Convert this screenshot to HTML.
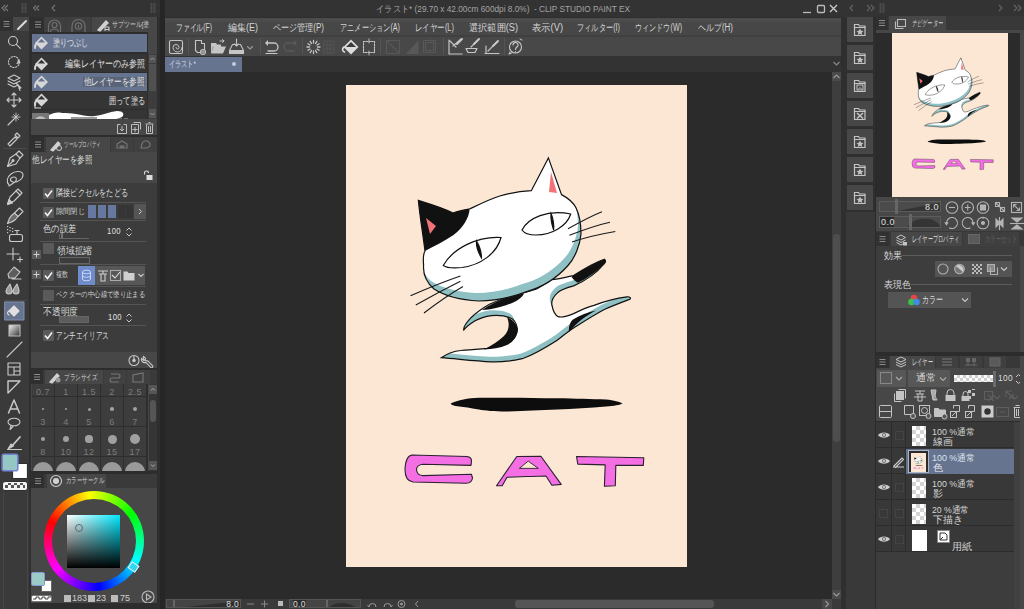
<!DOCTYPE html>
<html><head><meta charset="utf-8">
<style>
*{margin:0;padding:0;box-sizing:border-box}
html,body{width:1024px;height:609px;overflow:hidden;background:#2e2e2e;font-family:"Liberation Sans",sans-serif;color:#d8d8d8}
.a{position:absolute}
svg{display:block}
.t{font-size:9px;white-space:nowrap;line-height:1;transform-origin:0 0}
.j{transform:scaleX(.85);transform-origin:0 0}
</style></head><body>
<!-- title strip -->
<div class="a" style="left:0;top:0;width:1024px;height:17px;background:#333333">
<svg width="1024" height="17" fill="none" stroke="#777" stroke-width="1.1">
<path d="M5 5l-3 3 3 3M8 5l-3 3 3 3M36 5.5l-2.5 2.5 2.5 2.5M39 5.5l-2.5 2.5 2.5 2.5M55 5l-3 3 3 3"/>
<path d="M22.5 3v10M25.5 3v10M151.5 3v10M154.5 3v10" stroke="#4a4a4a" stroke-width="2"/>
<path d="M853 5l-3 3 3 3M867 5l3 3-3 3M871 5l3 3-3 3" stroke="#666"/>
<path d="M880.5 3v10M883.5 3v10" stroke="#4a4a4a" stroke-width="2"/>
<path d="M999 5l3 3-3 3M1014 5l3 3-3 3M1018 5l3 3-3 3" stroke="#666"/>
<path d="M803 12.5h8" stroke="#bbb" stroke-width="1.3"/><rect x="817.5" y="5.5" width="7" height="7" rx="1" stroke="#bbb" stroke-width="1.3"/><path d="M830 5l7 7M837 5l-7 7" stroke="#ccc" stroke-width="1.3"/>
</svg>
<span class="a t" style="left:376px;top:5px;font-size:9px;color:#a4a4a4;transform-origin:0 0;--w:254px;transform:scaleX(0.918)">イラスト* (29.70 x 42.00cm 600dpi 8.0%)&nbsp; - CLIP STUDIO PAINT EX</span>
</div>
<!-- left dock -->
<div class="a" id="ltool" style="left:0;top:17px;width:30px;height:592px;background:#3a3a3a;border-right:1px solid #2e2e2e">
<svg width="30" height="592" viewBox="0 17 30 592" fill="none" stroke="#c9c9c9" stroke-width="1.1" stroke-linecap="round" stroke-linejoin="round">
<!-- header pencil tab -->
<rect x="0" y="17" width="13" height="14" fill="#303030" stroke="none"/>
<path d="M4 21.5h5M4 24h5M4 26.5h5" stroke="#8a8a8a"/>
<rect x="13" y="17" width="16" height="14" fill="#474747" stroke="none"/>
<path d="M18 29l8-8" stroke="#dcdcdc" stroke-width="2"/>
<!-- magnifier 43 -->
<circle cx="13" cy="41" r="4.5"/><path d="M16.3 44.3l4 4"/>
<!-- lasso dotted 62 -->
<circle cx="14" cy="62" r="5.5" stroke-dasharray="1.2 1.6"/><path d="M18 60l2 2.5-3 1" fill="#c9c9c9"/>
<!-- layer select 81 -->
<path d="M8 78l6-3 6 3-6 3zM8 81l6 3 6-3M8 84l6 3 4-2"/><path d="M16 83l5 5-2 .5 1 2" fill="#c9c9c9"/>
<!-- move 100 -->
<path d="M14 93v14M7 100h14M12 95l2-2 2 2M12 105l2 2 2-2M9 98l-2 2 2 2M19 98l2 2-2 2"/>
<!-- magic wand 118 -->
<path d="M8 125l8-8"/><path d="M16 113v8M12 117h8M13.5 114.5l5 5M18.5 114.5l-5 5" stroke-width="0.9"/>
<!-- eyedropper 137 -->
<path d="M8 144l7-7 2 2-7 7zM15 135l2-2 3 3-2 2z"/>
<line x1="4" y1="148.5" x2="26" y2="148.5" stroke="#4c4c4c"/>
<!-- pen 158 -->
<path d="M7.5 166.5L10 158l6-4 4 4-4 6z"/><path d="M16 154l3-3 4 4-3 3" /><path d="M7.5 166.5l5-5"/><circle cx="13" cy="160.5" r="1" fill="#c9c9c9"/>
<!-- lasso brush 177 -->
<path d="M9 185c-3-3-2-8 2-11 5-4 12-3 12 1s-6 8-10 7-3-5 1-5c3 0 3 3 1 5l-6 4"/>
<!-- pencil 196 -->
<path d="M7.5 204.5L10 197l8-8 4 4-8 8z"/><path d="M7.5 204.5L9 199.5l3.5 3.5z" fill="#c9c9c9"/><path d="M16 191l4 4"/>
<!-- brush 215 -->
<path d="M7.5 223.5c1-4 2-6 4-8l3-2.5 3.5 3.5-2.5 3c-2 2-4 3-8 4z" fill="#c9c9c9" fill-opacity=".35"/><path d="M14.5 213l5-5 3.5 3.5-5 5"/>
<!-- airbrush 233 -->
<g fill="#c9c9c9" stroke="none"><rect x="7" y="226" width="1.2" height="1.2"/><rect x="9.5" y="227" width="1.2" height="1.2"/><rect x="7" y="229" width="1.2" height="1.2"/><rect x="12" y="228" width="1.2" height="1.2"/><rect x="9.5" y="230" width="1.2" height="1.2"/><rect x="7" y="232" width="1.2" height="1.2"/><rect x="12" y="231" width="1.2" height="1.2"/></g>
<path d="M15 230.5h4M17 230.5v3"/><rect x="9.5" y="234.5" width="13" height="7" rx="2"/><rect x="11.5" y="236.5" width="9" height="3" fill="#333" stroke="none"/>
<!-- decoration 255 -->
<path d="M13 248v12M7 254h12M20 257v5M17.5 259.5h5"/>
<!-- eraser 272 -->
<path d="M8 274l6-7 6 5-5 6H9zM12 279h9" fill="#c9c9c9" fill-opacity=".25"/>
<!-- blend 290 -->
<path d="M10 284c-2 3-4 5-4 7a3 3 0 006 0c0-2-1-4-2-7zM17 284c-2 3-4 5-4 7a3 3 0 006 0c0-2-1-4-2-7z" fill="#9a9a9a"/>
<line x1="4" y1="300.5" x2="26" y2="300.5" stroke="#4c4c4c"/>
<!-- fill selected 311 -->
<rect x="5" y="302" width="19" height="18" fill="#66748f" stroke="#8090b0" stroke-width="1"/>
<path d="M9 311l5-5 5 5-5 5z" fill="#e0e0e0" stroke="#e0e0e0"/><path d="M9 311c-2 1-2 3 0 4" stroke="#e0e0e0"/>
<!-- gradient 331 -->
<defs><linearGradient id="gr" x1="0" y1="0" x2="1" y2="1"><stop offset="0" stop-color="#f0f0f0"/><stop offset="1" stop-color="#333"/></linearGradient></defs>
<rect x="9" y="325" width="11" height="11" fill="url(#gr)" stroke="#bbb"/>
<!-- line 349 -->
<path d="M7 357l15-15"/>
<!-- frame 369 -->
<path d="M8 363h12v12H8zM8 367h12M14 367v8M14 371h6"/>
<!-- ruler 387 -->
<path d="M8 381h12l-12 12z" stroke-width="1.4"/>
<!-- text A 407 -->
<path d="M8.5 413l5.5-13 5.5 13M10.5 409h7" stroke-width="1.5"/>
<!-- balloon 424 -->
<ellipse cx="14" cy="422" rx="6" ry="3.8"/><path d="M11 425.5l-1 4 3-3"/>
<!-- correction line 443 -->
<path d="M20 437l-8 9" stroke-width="1.8"/><path d="M8 449l3-5 2.5 2z" fill="#c9c9c9"/><path d="M7.5 449.5h14"/>
<!-- colors -->
<rect x="12.5" y="463.5" width="15" height="15" fill="#fff" stroke="#2e2e2e" stroke-width="1.2"/>
<rect x="2.2" y="454.2" width="15.6" height="16.6" rx="2" fill="#94c6c3" stroke="#7482d4" stroke-width="1.6"/>
<rect x="2.5" y="481.5" width="25" height="9" rx="2.5" fill="#f4f4f4" stroke="#2e2e2e" stroke-width="1"/>
<path d="M3.5 493v116M27.5 493v116" stroke="#474747"/>
<path d="M5 485h3v3H5zM11 485h3v3h-3zM17 485h3v3h-3zM23 485h2v3h-2zM8 483h3v2H8zM14 483h3v2h-3zM20 483h3v2h-3z" fill="#555" stroke="none"/>
</svg></div>
<svg width="0" height="0" style="position:absolute"><defs>
<symbol id="bucket" viewBox="0 0 16 16"><path d="M7.5 1.5l6.5 6.5-6.5 6.5L1 8z" fill="#d6d6d6"/><path d="M7.5 3.8L11.2 7.5H3.8z" fill="currentColor"/><path d="M3.5 8.5C1.5 8.5 1 10 1 13" stroke="#d6d6d6" stroke-width="2" fill="none" stroke-linecap="round"/></symbol>
</defs></svg>
<div class="a" id="lsub" style="left:31px;top:17px;width:126px;height:592px;background:#474747">
 <!-- header -->
 <div class="a" style="left:0;top:0;width:126px;height:15px;background:#3a3a3a"></div>
 <div class="a" style="left:0;top:0;width:13px;height:15px;background:#2f2f2f"><svg width="13" height="15"><path d="M4 5h6M4 7.5h6M4 10h6" stroke="#8a8a8a"/></svg></div>
 <div class="a" style="left:13px;top:0;width:21px;height:15px;background:#3f3f3f"><svg width="21" height="15" fill="none" stroke="#707070" stroke-width="1.2"><path d="M4.5 15V9a6 6 0 0112 0v6"/><circle cx="10.5" cy="8" r="2.5"/><path d="M6.5 15a4 3 0 018 0"/></svg></div>
 <div class="a" style="left:35px;top:0;width:25px;height:15px;background:#3f3f3f"><svg width="25" height="15" fill="none" stroke="#707070" stroke-width="1.2"><path d="M6 15V9a6.5 6.5 0 0113 0v6"/><circle cx="12.5" cy="9" r="3.2"/><path d="M12.5 8v3"/></svg></div>
 <div class="a" style="left:61px;top:0;width:65px;height:15px;background:#474747;overflow:hidden"><svg class="a" style="left:4px;top:1px" width="14" height="14" fill="none" stroke="#d0d0d0" stroke-width="1.4"><path d="M2 12l8-9 2 2-8 8z" fill="#d0d0d0"/><path d="M9 9h4M9 11.5h4M9 9v4M13 9v4" stroke-width="1"/></svg><span class="a t" style="left:20px;top:4px;font-size:8px;color:#cfcfcf;--w:37px;transform:scaleX(0.737)">サブツール[塗</span></div>
 <!-- list -->
 <div class="a" style="left:0;top:15px;width:117px;height:87px;background:#2d2d2d"></div>
 <div class="a" style="left:1px;top:17px;width:115px;height:18px;background:#66748f;color:#66748f"><svg class="a" style="left:2px;top:1px" width="16" height="16"><use href="#bucket"/></svg><span class="a t" style="left:21px;top:4px;font-size:10px;color:#e6e6e6;--w:35px;transform:scaleX(0.700)">塗りつぶし</span></div>
 <div class="a" style="left:1px;top:37px;width:115px;height:18px;background:#353535;color:#353535"><svg class="a" style="left:2px;top:2px" width="16" height="16"><use href="#bucket"/></svg><span class="a t" style="right:2px;top:5px;font-size:10px;color:#e0e0e0;transform-origin:100% 0;--w:80px;transform:scaleX(0.800)">編集レイヤーのみ参照</span></div>
 <div class="a" style="left:1px;top:56px;width:115px;height:18px;background:#66748f;color:#66748f"><svg class="a" style="left:2px;top:1px" width="16" height="16"><use href="#bucket"/></svg><span class="a t" style="right:2px;top:4px;font-size:10px;color:#e6e6e6;background:#5a6478;padding:0 1px;transform-origin:100% 0;--w:62px;transform:scaleX(0.756)">他レイヤーを参照</span></div>
 <div class="a" style="left:1px;top:75px;width:115px;height:17px;background:#353535;color:#353535"><svg class="a" style="left:2px;top:0px" width="16" height="16"><use href="#bucket"/></svg><svg class="a" style="left:2px;top:7px" width="10" height="10" fill="none" stroke="#d6d6d6" stroke-width="1.2"><path d="M1 3v6h6"/></svg><span class="a t" style="right:2px;top:4px;font-size:10px;color:#e0e0e0;transform-origin:100% 0;--w:36px;transform:scaleX(0.720)">囲って塗る</span></div>
 <div class="a" style="left:1px;top:93px;width:115px;height:10px;background:#353535;overflow:hidden">
   <svg width="115" height="10"><rect x="0" y="3" width="17" height="7" fill="#777"/><path d="M3 10c1-5 10-5 11 0z" fill="#bbb"/><path d="M17 10V5c4-2 8-3 13-2 5 0 9 0 14 1 7 1 12 3 19 2 8-1 14-4 22-5 6 0 8 3 5 6l-8 3z" fill="#fff"/><rect x="39" y="7" width="26" height="3" fill="#9a9a9a"/><path d="M86 9h4M92 9h4" stroke="#aaa"/></svg>
 </div>
 <!-- scrollbar -->
 <div class="a" style="left:117px;top:37px;width:9px;height:65px;background:#3c3c3c"></div>
 <div class="a" style="left:118px;top:38px;width:7px;height:8px;background:#555"><svg width="7" height="8"><path d="M1.5 5L3.5 3l2 2" stroke="#999" fill="none"/></svg></div>
 <div class="a" style="left:118px;top:47px;width:7px;height:27px;background:#505050"></div>
 <div class="a" style="left:118px;top:92px;width:7px;height:9px;background:#555"><svg width="7" height="9"><path d="M1.5 4L3.5 6l2-2" stroke="#999" fill="none"/></svg></div>
 <!-- bottom icons -->
 <div class="a" style="left:0;top:102px;width:126px;height:16px;background:#474747">
  <svg class="a" style="left:85px;top:2px" width="40" height="13" fill="none" stroke="#bdbdbd" stroke-width="1"><path d="M1.5 3.5h3M7.5 3.5h3v9h-9v-9M6 5v5M4 8l2 2 2-2"/><path d="M17.5 1.5h7v7M15.5 3.5h7v9h-7zM19 6v5M16.5 8.5h5"/><path d="M29.5 3h8M32.5 1.5h2M30.5 3.5v9h6v-9M32.5 5v6M34.5 5v6" /></svg>
 </div>
<div class="a" style="left:0;top:118px;width:126px;height:2px;background:#2d2d2d"></div>
<div class="a" style="left:0;top:120px;width:126px;height:15px;background:#3a3a3a"></div>
<div class="a" style="left:0;top:120px;width:13px;height:15px;background:#2f2f2f"><svg width="13" height="15"><path d="M4 5h6M4 7.5h6M4 10h6" stroke="#8a8a8a"/></svg></div>
<div class="a" style="left:15px;top:120px;width:64px;height:15px;background:#474747"><svg class="a" style="left:3px;top:1px" width="14" height="14" fill="none" stroke="#d0d0d0" stroke-width="1.3"><path d="M2 12l7-8 2 2-7 7z" fill="#d0d0d0"/><circle cx="10" cy="10" r="2.5" stroke-width="1"/></svg><span class="a t j" style="left:18px;top:4px;font-size:8px;color:#c8c8c8;--w:37px;transform:scaleX(0.578)">ツールプロパティ</span></div>
<div class="a" style="left:80px;top:120px;width:22px;height:15px;background:#404040"><svg width="22" height="15" fill="none" stroke="#777" stroke-width="1.1"><path d="M6 11V7l5-3 5 3v4zM9 9h4l-2 2z"/></svg></div>
<div class="a" style="left:103px;top:120px;width:23px;height:15px;background:#404040"><svg width="23" height="15" fill="none" stroke="#777" stroke-width="1.1"><path d="M7 11l1-4a4 4 0 118 2l-3 2z"/></svg></div>
<div class="a" style="left:0;top:135px;width:126px;height:31px;background:#474747"><span class="a t j" style="left:1px;top:3px;font-size:10px;color:#dedede;--w:60px;transform:scaleX(0.750)">他レイヤーを参照</span>
<svg class="a" style="left:112px;top:18px" width="10" height="11" fill="none" stroke="#ddd" stroke-width="1.1"><path d="M1.5 4.5V3a2 2 0 014 0"/><rect x="3.5" y="5" width="6" height="5" fill="#ddd" stroke="none"/></svg></div>
<div class="a" style="left:0;top:166px;width:126px;height:169px;background:#3c3c3c"></div>

<div class="a" style="left:9px;top:185px;width:106px;height:1px;background:#555"></div>
<div class="a" style="left:9px;top:203px;width:106px;height:1px;background:#555"></div>
<div class="a" style="left:9px;top:224px;width:106px;height:1px;background:#555"></div>
<div class="a" style="left:9px;top:247px;width:106px;height:1px;background:#555"></div>
<div class="a" style="left:9px;top:269px;width:106px;height:1px;background:#555"></div>
<div class="a" style="left:9px;top:287px;width:106px;height:1px;background:#555"></div>
<div class="a" style="left:9px;top:308px;width:106px;height:1px;background:#555"></div>
<div class="a" style="left:12px;top:171px;width:11px;height:11px;background:#5a5a5a;border-radius:1px"><svg width="11" height="11"><path d="M2 5.5l2.5 3L9 2.5" stroke="#f2f2f2" stroke-width="1.6" fill="none"/></svg></div>
<span class="a t j" style="left:25px;top:171px;font-size:9.5px;color:#dcdcdc;--w:72px;transform:scaleX(0.720)">隣接ピクセルをたどる</span>
<div class="a" style="left:12px;top:190px;width:11px;height:11px;background:#5a5a5a;border-radius:1px"><svg width="11" height="11"><path d="M2 5.5l2.5 3L9 2.5" stroke="#f2f2f2" stroke-width="1.6" fill="none"/></svg></div>
<span class="a t j" style="left:25px;top:191px;font-size:8px;color:#c8c8c8;--w:29px;transform:scaleX(0.906)">隙間閉じ</span>
<div class="a" style="left:57px;top:188px;width:8px;height:13px;background:#6678a0"></div>
<div class="a" style="left:67px;top:188px;width:8px;height:13px;background:#6678a0"></div>
<div class="a" style="left:77px;top:188px;width:8px;height:13px;background:#6678a0"></div>
<div class="a" style="left:87px;top:188px;width:7px;height:13px;background:#353535"></div>
<div class="a" style="left:95px;top:188px;width:7px;height:13px;background:#353535"></div>
<div class="a" style="left:103px;top:187px;width:12px;height:15px;background:#555"><svg width="12" height="15"><path d="M5 5l2.5 2.5L5 10" stroke="#ccc" fill="none"/></svg></div>
<span class="a t j" style="left:12px;top:207px;font-size:9.5px;color:#dcdcdc;--w:33px;transform:scaleX(0.825)">色の誤差</span>
<div class="a" style="left:28px;top:217px;width:30px;height:5px;border-bottom:1px solid #666;border-left:1px solid #666"></div><div class="a" style="left:30px;top:216px;width:2px;height:5px;background:#777"></div>
<span class="a t j" style="left:76px;top:210px;font-size:9px;color:#e0e0e0;letter-spacing:0.5px">100</span>
<svg class="a" style="left:94px;top:209px" width="8" height="12" fill="none" stroke="#ccc"><path d="M1.5 4.5L4 2l2.5 2.5M1.5 7.5L4 10l2.5-2.5"/></svg>
<div class="a" style="left:1px;top:233px;width:9px;height:9px;background:#5a5a5a"><svg width="9" height="9"><path d="M4.5 1.5v6M1.5 4.5h6" stroke="#cfcfcf"/></svg></div>
<div class="a" style="left:12px;top:226px;width:11px;height:11px;background:#5a5a5a;border-radius:1px"></div>
<span class="a t j" style="left:26px;top:229px;font-size:9.5px;color:#dcdcdc;--w:35px;transform:scaleX(0.875)">領域拡縮</span>
<div class="a" style="left:28px;top:240px;width:31px;height:7px;border:1px solid #666"></div>
<div class="a" style="left:1px;top:253px;width:9px;height:9px;background:#5a5a5a"><svg width="9" height="9"><path d="M4.5 1.5v6M1.5 4.5h6" stroke="#cfcfcf"/></svg></div>
<div class="a" style="left:12px;top:253px;width:11px;height:11px;background:#5a5a5a;border-radius:1px"><svg width="11" height="11"><path d="M2 5.5l2.5 3L9 2.5" stroke="#f2f2f2" stroke-width="1.6" fill="none"/></svg></div>
<span class="a t j" style="left:25px;top:254px;font-size:8px;color:#c8c8c8;--w:12px;transform:scaleX(0.750)">複数</span>
<div class="a" style="left:47px;top:249px;width:67px;height:19px;background:#575757"></div>
<div class="a" style="left:47px;top:249px;width:17px;height:19px;background:#6f8cca"><svg width="17" height="19" fill="none" stroke="#c8d6ff" stroke-width="1"><ellipse cx="8.5" cy="6" rx="4" ry="1.8"/><path d="M4.5 6v7a4 1.8 0 008 0V6M4.5 9.5a4 1.8 0 008 0"/></svg></div>
<svg class="a" style="left:65px;top:249px" width="48" height="19" fill="none" stroke="#d0d0d0" stroke-width="1.1"><path d="M2 5h10M7 5v3M3 8h8M5 8v7h4V8" /><rect x="14.5" y="4.5" width="10" height="10" stroke="#aaa"/><path d="M16 9l3 3 5-6" stroke="#ddd"/><path d="M27.5 5.5h4l1 1.5h6v7.5h-11z" fill="#d0d0d0" stroke="none"/><path d="M42.5 8l2.5 2.5L47.5 8" stroke="#ccc"/></svg>
<div class="a" style="left:12px;top:273px;width:11px;height:11px;background:#5a5a5a;border-radius:1px"></div>
<span class="a t j" style="left:25px;top:274px;font-size:8px;color:#d0d0d0;--w:89px;transform:scaleX(0.795)">ベクターの中心線で塗り止まる</span>
<span class="a t j" style="left:12px;top:290px;font-size:9.5px;color:#dcdcdc;--w:35px;transform:scaleX(0.875)">不透明度</span>
<div class="a" style="left:28px;top:299px;width:30px;height:7px;background:#5c5c5c;border:1px solid #666"></div>
<span class="a t j" style="left:77px;top:296px;font-size:9px;color:#e0e0e0;letter-spacing:0.5px">100</span>
<svg class="a" style="left:94px;top:295px" width="8" height="12" fill="none" stroke="#ccc"><path d="M1.5 4.5L4 2l2.5 2.5M1.5 7.5L4 10l2.5-2.5"/></svg>
<div class="a" style="left:12px;top:313px;width:11px;height:11px;background:#5a5a5a;border-radius:1px"><svg width="11" height="11"><path d="M2 5.5l2.5 3L9 2.5" stroke="#f2f2f2" stroke-width="1.6" fill="none"/></svg></div>
<span class="a t j" style="left:25px;top:314px;font-size:9.5px;color:#dcdcdc;--w:53px;transform:scaleX(0.662)">アンチエイリアス</span>
<div class="a" style="left:0;top:335px;width:126px;height:16px;background:#474747"><svg class="a" style="left:96px;top:1px" width="30" height="15" fill="none" stroke="#c8c8c8" stroke-width="1.1"><circle cx="7" cy="7.5" r="5"/><path d="M7 3v4.5" /><circle cx="7" cy="7.5" r="1.2" fill="#c8c8c8"/><path d="M16.5 3.5a3.2 3.2 0 004 4.2l5 5a1.2 1.2 0 01-1.7 1.7l-5-5a3.2 3.2 0 01-4.2-4l2 2 1.5-.5.5-1.5z"/></svg></div>
<div class="a" style="left:0;top:351px;width:126px;height:2px;background:#2d2d2d"></div>
<div class="a" style="left:0;top:353px;width:126px;height:14px;background:#3a3a3a"></div>
<div class="a" style="left:0;top:353px;width:12px;height:14px;background:#2f2f2f"><svg width="12" height="14"><path d="M3 4.5h6M3 7h6M3 9.5h6" stroke="#8a8a8a"/></svg></div>
<div class="a" style="left:14px;top:353px;width:58px;height:14px;background:#474747"><svg class="a" style="left:3px;top:0" width="14" height="14" fill="none" stroke="#d0d0d0" stroke-width="1.3"><path d="M2 12l7-8 2 2-7 7z" fill="#d0d0d0"/><circle cx="10" cy="10" r="2.5" fill="#999" stroke="none"/></svg><span class="a t j" style="left:19px;top:4px;font-size:8px;color:#d0d0d0;--w:33px;transform:scaleX(0.688)">ブラシサイズ</span></div>
<div class="a" style="left:73px;top:353px;width:22px;height:14px;background:#404040"><svg width="22" height="14" fill="none" stroke="#777" stroke-width="1.1"><path d="M7 4h7a2 2 0 010 4H8a2 2 0 000 4h7"/></svg></div>
<div class="a" style="left:96px;top:353px;width:23px;height:14px;background:#404040"><svg width="23" height="14" fill="none" stroke="#777" stroke-width="1.1"><path d="M6 12V5l10-2v9z"/></svg></div>
<div class="a" style="left:1px;top:367px;width:116px;height:87px;background:#2e2e2e;overflow:hidden"><div class="a" style="left:0px;top:-17px;width:22px;height:29px;background:#3d3d3d"><span class="a t" style="left:0;width:22px;text-align:center;top:21px;font-size:9px;color:#7c7c7c;letter-spacing:.5px">0.7</span></div><div class="a" style="left:23px;top:-17px;width:22px;height:29px;background:#3d3d3d"><span class="a t" style="left:0;width:22px;text-align:center;top:21px;font-size:9px;color:#7c7c7c;letter-spacing:.5px">1</span></div><div class="a" style="left:46px;top:-17px;width:22px;height:29px;background:#3d3d3d"><span class="a t" style="left:0;width:22px;text-align:center;top:21px;font-size:9px;color:#7c7c7c;letter-spacing:.5px">1.5</span></div><div class="a" style="left:69px;top:-17px;width:22px;height:29px;background:#3d3d3d"><span class="a t" style="left:0;width:22px;text-align:center;top:21px;font-size:9px;color:#7c7c7c;letter-spacing:.5px">2</span></div><div class="a" style="left:92px;top:-17px;width:22px;height:29px;background:#3d3d3d"><span class="a t" style="left:0;width:22px;text-align:center;top:21px;font-size:9px;color:#7c7c7c;letter-spacing:.5px">2.5</span></div><div class="a" style="left:0px;top:13px;width:22px;height:29px;background:#3d3d3d"><div class="a" style="left:10px;top:11px;width:2px;height:2px;border-radius:50%;background:#a0a0a0"></div><span class="a t" style="left:0;width:22px;text-align:center;top:21px;font-size:9px;color:#7c7c7c;letter-spacing:.5px">3</span></div><div class="a" style="left:23px;top:13px;width:22px;height:29px;background:#3d3d3d"><div class="a" style="left:9.8px;top:10.8px;width:2.4px;height:2.4px;border-radius:50%;background:#a0a0a0"></div><span class="a t" style="left:0;width:22px;text-align:center;top:21px;font-size:9px;color:#7c7c7c;letter-spacing:.5px">4</span></div><div class="a" style="left:46px;top:13px;width:22px;height:29px;background:#3d3d3d"><div class="a" style="left:9.5px;top:10.5px;width:3.0px;height:3.0px;border-radius:50%;background:#a0a0a0"></div><span class="a t" style="left:0;width:22px;text-align:center;top:21px;font-size:9px;color:#7c7c7c;letter-spacing:.5px">5</span></div><div class="a" style="left:69px;top:13px;width:22px;height:29px;background:#3d3d3d"><div class="a" style="left:9.3px;top:10.3px;width:3.4px;height:3.4px;border-radius:50%;background:#a0a0a0"></div><span class="a t" style="left:0;width:22px;text-align:center;top:21px;font-size:9px;color:#7c7c7c;letter-spacing:.5px">6</span></div><div class="a" style="left:92px;top:13px;width:22px;height:29px;background:#3d3d3d"><div class="a" style="left:9px;top:10px;width:4px;height:4px;border-radius:50%;background:#a0a0a0"></div><span class="a t" style="left:0;width:22px;text-align:center;top:21px;font-size:9px;color:#7c7c7c;letter-spacing:.5px">7</span></div><div class="a" style="left:0px;top:43px;width:22px;height:29px;background:#3d3d3d"><div class="a" style="left:8.7px;top:9.7px;width:4.6px;height:4.6px;border-radius:50%;background:#a0a0a0"></div><span class="a t" style="left:0;width:22px;text-align:center;top:21px;font-size:9px;color:#7c7c7c;letter-spacing:.5px">8</span></div><div class="a" style="left:23px;top:43px;width:22px;height:29px;background:#3d3d3d"><div class="a" style="left:8px;top:9px;width:6px;height:6px;border-radius:50%;background:#a0a0a0"></div><span class="a t" style="left:0;width:22px;text-align:center;top:21px;font-size:9px;color:#7c7c7c;letter-spacing:.5px">10</span></div><div class="a" style="left:46px;top:43px;width:22px;height:29px;background:#3d3d3d"><div class="a" style="left:7.4px;top:8.4px;width:7.2px;height:7.2px;border-radius:50%;background:#a0a0a0"></div><span class="a t" style="left:0;width:22px;text-align:center;top:21px;font-size:9px;color:#7c7c7c;letter-spacing:.5px">12</span></div><div class="a" style="left:69px;top:43px;width:22px;height:29px;background:#3d3d3d"><div class="a" style="left:6.5px;top:7.5px;width:9.0px;height:9.0px;border-radius:50%;background:#a0a0a0"></div><span class="a t" style="left:0;width:22px;text-align:center;top:21px;font-size:9px;color:#7c7c7c;letter-spacing:.5px">15</span></div><div class="a" style="left:92px;top:43px;width:22px;height:29px;background:#3d3d3d"><div class="a" style="left:6px;top:7px;width:10px;height:10px;border-radius:50%;background:#a0a0a0"></div><span class="a t" style="left:0;width:22px;text-align:center;top:21px;font-size:9px;color:#7c7c7c;letter-spacing:.5px">17</span></div><div class="a" style="left:0px;top:73px;width:22px;height:29px;background:#3d3d3d"><div class="a" style="left:1px;top:5px;width:20px;height:20px;border-radius:50%;background:#9a9a9a"></div></div><div class="a" style="left:23px;top:73px;width:22px;height:29px;background:#3d3d3d"><div class="a" style="left:1px;top:5px;width:20px;height:20px;border-radius:50%;background:#9a9a9a"></div></div><div class="a" style="left:46px;top:73px;width:22px;height:29px;background:#3d3d3d"><div class="a" style="left:1px;top:5px;width:20px;height:20px;border-radius:50%;background:#9a9a9a"></div></div><div class="a" style="left:69px;top:73px;width:22px;height:29px;background:#3d3d3d"><div class="a" style="left:1px;top:5px;width:20px;height:20px;border-radius:50%;background:#9a9a9a"></div></div><div class="a" style="left:92px;top:73px;width:22px;height:29px;background:#3d3d3d"><div class="a" style="left:1px;top:5px;width:20px;height:20px;border-radius:50%;background:#9a9a9a"></div></div></div>
<div class="a" style="left:118px;top:367px;width:8px;height:87px;background:#353535"></div>
<div class="a" style="left:118px;top:368px;width:8px;height:9px;background:#555"><svg width="8" height="9"><path d="M2 5.5L4 3.5l2 2" stroke="#aaa" fill="none"/></svg></div>
<div class="a" style="left:119px;top:383px;width:6px;height:22px;background:#555;border-radius:3px"></div>
<div class="a" style="left:118px;top:444px;width:8px;height:9px;background:#555"><svg width="8" height="9"><path d="M2 3.5L4 5.5l2-2" stroke="#aaa" fill="none"/></svg></div>
<div class="a" style="left:0;top:454px;width:126px;height:3px;background:#2d2d2d"></div>
<div class="a" style="left:0;top:457px;width:126px;height:14px;background:#3a3a3a"></div>
<div class="a" style="left:0;top:457px;width:13px;height:14px;background:#2f2f2f"><svg width="13" height="14"><path d="M4 4.5h6M4 7h6M4 9.5h6" stroke="#8a8a8a"/></svg></div>
<div class="a" style="left:16px;top:457px;width:59px;height:14px;background:#474747"><svg class="a" style="left:2px;top:0" width="14" height="14" fill="none" stroke="#d0d0d0" stroke-width="1.1"><circle cx="7" cy="7" r="5.5"/><circle cx="7" cy="7" r="2.5" fill="#d0d0d0"/></svg><span class="a t j" style="left:19px;top:3px;font-size:8px;color:#d0d0d0;--w:38px;transform:scaleX(0.679)">カラーサークル</span></div>
<div class="a" style="left:0;top:471px;width:126px;height:115px;background:#474747"></div>
<div class="a" style="left:13px;top:474px;width:100px;height:100px;border-radius:50%;background:conic-gradient(from 294deg,#f00,#ff0,#0f0,#0ff,#00f,#f0f,#f00)"></div>
<div class="a" style="left:21px;top:482px;width:84px;height:84px;border-radius:50%;background:#474747"></div>
<div class="a" style="left:36px;top:498px;width:53px;height:53px;background:linear-gradient(to bottom,rgba(0,0,0,0),#000),linear-gradient(to right,#fff,#00e8ff)"></div>
<div class="a" style="left:44px;top:507px;width:8px;height:8px;border-radius:50%;border:1px solid #666"></div>
<div class="a" style="left:98px;top:546px;width:9px;height:8px;background:#2ed8f0;border:1.5px solid #f4f4f4;transform:rotate(35deg)"></div>
<div class="a" style="left:10px;top:563px;width:11px;height:12px;background:#fff;border:1px solid #666"></div>
<div class="a" style="left:0px;top:555px;width:14px;height:14px;background:#9ccac9;border:1.5px solid #8497d3;border-radius:2px"></div>
<div class="a" style="left:0px;top:578px;width:21px;height:7px;background:#fff;border:1px solid #777;border-radius:2px"><svg width="19" height="5"><path d="M1 3h3v-2h3v2h3v-2h3v2h3v-2h3" stroke="#444" fill="none"/></svg></div>
<svg class="a" style="left:33px;top:577px" width="70" height="10"><rect x="0" y="1" width="7" height="7" fill="#bbb"/><rect x="24" y="1" width="7" height="7" fill="#bbb"/><rect x="47" y="1" width="7" height="7" fill="#bbb"/></svg>
<span class="a t" style="left:41px;top:577px;font-size:9px;color:#d0d0d0">183</span>
<span class="a t" style="left:65px;top:577px;font-size:9px;color:#d0d0d0">23</span>
<span class="a t" style="left:89px;top:577px;font-size:9px;color:#d0d0d0">75</span>
<svg class="a" style="left:110px;top:573px" width="14" height="14" fill="none" stroke="#bbb" stroke-width="1.1"><circle cx="7" cy="7" r="6"/><path d="M5.5 4v6l4.5-3z"/></svg>
<div class="a" style="left:0;top:586px;width:126px;height:6px;background:#2d2d2d"></div>
</div>
<div class="a" style="left:29px;top:17px;width:2px;height:592px;background:#2f2f2f"></div>
<!-- separator -->
<div class="a" style="left:160px;top:0;width:5px;height:609px;background:#262626"></div>
<!-- menu -->
<div class="a" id="menu" style="left:165px;top:18px;width:676px;height:18px;background:linear-gradient(#4c4c4c 0,#4c4c4c 4px,#474747 4px,#474747 17px,#404040 17px)"><span class="a t j" style="left:11px;top:5px;font-size:10px;color:#d4d4d4;--w:36px;transform:scaleX(0.682)">ファイル(F)</span><span class="a t j" style="left:63px;top:5px;font-size:10px;color:#d4d4d4;--w:30px;transform:scaleX(0.900)">編集(E)</span><span class="a t j" style="left:108px;top:5px;font-size:10px;color:#d4d4d4;--w:51px;transform:scaleX(0.805)">ページ管理(P)</span><span class="a t j" style="left:175px;top:5px;font-size:10px;color:#d4d4d4;--w:60px;transform:scaleX(0.720)">アニメーション(A)</span><span class="a t j" style="left:250px;top:5px;font-size:10px;color:#d4d4d4;--w:39px;transform:scaleX(0.747)">レイヤー(L)</span><span class="a t j" style="left:304px;top:5px;font-size:10px;color:#d4d4d4;--w:49px;transform:scaleX(0.919)">選択範囲(S)</span><span class="a t j" style="left:367px;top:5px;font-size:10px;color:#d4d4d4;--w:31px;transform:scaleX(0.930)">表示(V)</span><span class="a t j" style="left:412px;top:5px;font-size:10px;color:#d4d4d4;--w:43px;transform:scaleX(0.723)">フィルター(I)</span><span class="a t j" style="left:470px;top:5px;font-size:10px;color:#d4d4d4;--w:47px;transform:scaleX(0.711)">ウィンドウ(W)</span><span class="a t j" style="left:533px;top:5px;font-size:10px;color:#d4d4d4;--w:35px;transform:scaleX(0.797)">ヘルプ(H)</span></div>
<div class="a" id="tbar" style="left:165px;top:36px;width:676px;height:20px;background:#484848;border-top:1px solid #404040">
<svg width="676" height="19" viewBox="165 37 676 19" style="margin-top:0" fill="none" stroke="#c6c6c6" stroke-width="1.1" stroke-linejoin="round" stroke-linecap="round">
<g stroke="#555"><path d="M188.5 38v16M260.5 38v16M302.5 38v16M380.5 38v16M443.5 38v16M504.5 38v16"/></g>
<rect x="169.5" y="40.5" width="13" height="13" rx="1.5"/><path d="M176 47.5a1.5 1.5 0 103 0 3 3 0 10-6 0 4.5 4.5 0 109 0" stroke-width="1"/>
<path d="M195.5 40.5h6v3h3v6M195.5 40.5v10l2 2h3"/><circle cx="203" cy="52" r="2.5"/><path d="M203 50.5v3M201.5 52h3" stroke-width="0.9"/>
<path d="M211 43h5l1 1.5h4v2h-8l-2 7z M211 53.5l2.5-7H226l-3 7z" fill="#c6c6c6" stroke="none"/><path d="M220 41h4l-1.5-1.5M224 41l-1.5 1.5" stroke-width="1"/>
<path d="M229.5 50.5l3-6h2M239.5 44.5h1l3 6M229.5 50.5h14v3h-14z" /><path d="M236.5 39v7M234.5 44l2 2 2-2"/><rect x="230" y="51" width="13" height="2.5" fill="#c6c6c6" stroke="none"/>
<path d="M247.5 46.5l2.5 2.5 2.5-2.5" stroke="#9a9a9a"/>
<path d="M267 43h7a4 4 0 010 8h-6" stroke-width="1.3"/><path d="M265 43l3-3v6z" fill="#c6c6c6" stroke="none"/><path d="M266 53.5h11"/>
<path d="M295 43h-7a4 4 0 000 8h6" stroke="#5a5a5a" stroke-width="1.3"/><path d="M297 43l-3-3v6z" fill="#5a5a5a" stroke="none"/>
<path d="M317.5 47.0L320.0 47.0M317.0 49.0L319.1 50.2M315.5 50.5L316.8 52.6M313.5 51.0L313.5 53.5M311.5 50.5L310.2 52.6M310.0 49.0L307.9 50.2M309.5 47.0L307.0 47.0M310.0 45.0L307.9 43.8M311.5 43.5L310.2 41.4M313.5 43.0L313.5 40.5M315.5 43.5L316.8 41.4M317.0 45.0L319.1 43.8" stroke-width="1.3"/>
<path d="M324 41h10v12h-10zM327 41v12M330 41v12M324 45h10M324 49h10" stroke="#555" stroke-width="0.8"/>
<path d="M351 39.5l7.5 7.5-7.5 7.5-7.5-7.5z" fill="#dcdcdc" stroke="none"/><path d="M351 42l5 5h-10z" fill="#3b3b3b" stroke="none"/><path d="M344 47c-2 1.5-2 4 .5 5" stroke="#dcdcdc" stroke-width="1.6"/>
<rect x="363.5" y="41.5" width="11" height="11" stroke-dasharray="1.5 1.2"/><path d="M369 39v4M369 51v4" stroke-width="0.9"/>
<g stroke="#585858"><rect x="386.5" y="40.5" width="13" height="13"/><path d="M387 41l12 12"/><path d="M407 53.5l11-12v12z" fill="#585858"/><rect x="423.5" y="40.5" width="12" height="12"/><rect x="425.5" y="42.5" width="8" height="8"/></g>
<path d="M449 40v14h13M450 41l6 6M453 46l8-7"  stroke-width="1.2"/><path d="M457 44l5-5" stroke-width="2"/>
<path d="M466 48.5h11l-2 4h-7zM471 47l7-7" stroke-width="1.2"/><path d="M474 44l5-5" stroke-width="2"/>
<path d="M485 53.5h14M486 46v7.5M488 51l9-9" stroke-width="1.2"/><path d="M493 46l5-5" stroke-width="2"/>
<circle cx="515.5" cy="47" r="6"/><path d="M513 45a2.5 2.5 0 114 2c-1 .7-1.5 1-1.5 2.5M515.5 51.5v.5" stroke-width="1.2"/><path d="M510 52l-1 2 2.5-1" /><path d="M520 39l2 1" stroke-width="1"/>
</svg></div>
<div class="a" id="tabbar" style="left:165px;top:56px;width:676px;height:16px;background:#333333"></div>
<div class="a" id="tab" style="left:165px;top:57px;width:77px;height:15px;background:#66748f"><span class="a t" style="left:4px;top:3px;font-size:9px;color:#d6dae6;--w:27px;transform:scaleX(0.683)">イラスト*</span><div class="a" style="left:67px;top:5px;width:4px;height:4px;border-radius:50%;background:#c8ccd8"></div></div>
<svg class="a" style="left:832px;top:59px" width="9" height="9"><path d="M1.5 3l3 3 3-3" stroke="#888" fill="none" stroke-width="1.2"/></svg>
<div class="a" id="canvasbg" style="left:165px;top:72px;width:676px;height:537px;background:#2b2b2b"></div>
<div class="a" style="left:832px;top:72px;width:9px;height:527px;background:#3e3e3e"></div>
<div class="a" style="left:832px;top:72px;width:9px;height:9px;background:#4a4a4a"><svg width="9" height="9"><path d="M1.5 6l3-3 3 3" stroke="#999" fill="none" stroke-width="1.2"/></svg></div>
<div class="a" style="left:833px;top:234px;width:7px;height:208px;background:#4e4e4e;border-radius:3px"></div>
<div class="a" style="left:832px;top:590px;width:9px;height:9px;background:#4a4a4a"><svg width="9" height="9"><path d="M1.5 3l3 3 3-3" stroke="#999" fill="none" stroke-width="1.2"/></svg></div>
<div class="a" style="left:165px;top:599px;width:676px;height:10px;background:#3a3a3a"></div>
<div class="a" style="left:166px;top:599px;width:75px;height:9px;background:#444;border:1px solid #555;overflow:hidden"><svg width="75" height="9" class="a" style="left:0;top:0"><path d="M0 9L75 1v8z" fill="#2e2e2e"/><rect x="6" y="0" width="2" height="9" fill="#666"/></svg><span class="a t" style="right:1px;top:0;font-size:8.5px;color:#ddd;letter-spacing:.3px">8.0</span></div>
<svg class="a" style="left:245px;top:599px" width="40" height="10" stroke="#888" stroke-width="1" fill="none"><path d="M2 5h7M16 5h7M19.5 1.5v7"/><rect x="33" y="2" width="5" height="5" fill="#bbb" stroke="none"/></svg>
<div class="a" style="left:289px;top:599px;width:72px;height:9px;background:#444;border:1px solid #555;overflow:hidden"><svg width="72" height="9" class="a" style="left:0;top:0"><path d="M38 9c6-8 20-8 30 0z" fill="#2e2e2e"/><rect x="36" y="0" width="2" height="9" fill="#666"/></svg><span class="a t" style="left:3px;top:0;font-size:8.5px;color:#ddd;background:#2b2b2b;letter-spacing:.3px">0.0</span></div>
<svg class="a" style="left:366px;top:599px" width="60" height="10" stroke="#999" stroke-width="1" fill="none"><path d="M3 8a3.5 3.5 0 117 0M3 8l-1.5-2M18 8a3.5 3.5 0 117 0M25 8l1.5-2"/><circle cx="35.5" cy="5" r="3.5"/><circle cx="35.5" cy="5" r="1" fill="#999"/><path d="M52 2l-2.5 3 2.5 3"/></svg>
<div class="a" style="left:515px;top:600px;width:199px;height:8px;background:#555;border-radius:3px"></div>
<svg class="a" style="left:822px;top:599px" width="10" height="10"><rect width="10" height="10" fill="#484848"/><path d="M3.5 2l3 3-3 3" stroke="#999" fill="none" stroke-width="1.2"/></svg>
<svg width="0" height="0" style="position:absolute"><defs><symbol id="art" viewBox="346 85 341 482">
<rect x="346" y="85" width="341" height="482" fill="#fbe7d4"/>
<!-- body -->
<clipPath id="bc"><path d="M551 279.7C560 279 566 277 573.6 275.6C585 268 596 262 604.3 259.2C606 260 606 262 604 264C596 274 587 280 573.6 285.9C566 288 560 290 557.2 293.1C553 297 551 301 552 305.4C553 311 555 315 558.2 316.7C563 318 568 316 573.6 313.6C581 310 588 307 594 305.4C605 301 617 298 626.9 296.8C630 296.5 631 298 630 299.2C620 303 612 306 604.3 309.5C594 315 583 322 573.6 327.9C567 332 562 337 557.2 340.2C545 348 533 355 522.3 358.7C512 361 501 362 491.5 361.8C475 361 458 359 441.3 357.7C448 353 454 351 460.8 350.5C470 349.5 479 349 487.4 348.4C498 347 507 344 512 340.2C516 336 518 332 517.2 327.9C516 322 514 319 510 317.7C504 315.5 497 315 491.5 315.6C485 316.5 480 318 475.1 320.8C470 324 466 327 463.8 330C463 327 467 322 471 317.7C477 312 483 308 489.5 304.3C498 300 507 297 516.1 295.1C523 293 530 291 536.6 289C542 286 547 282 551 279.7Z"/></clipPath>
<path d="M551 279.7C560 279 566 277 573.6 275.6C585 268 596 262 604.3 259.2C606 260 606 262 604 264C596 274 587 280 573.6 285.9C566 288 560 290 557.2 293.1C553 297 551 301 552 305.4C553 311 555 315 558.2 316.7C563 318 568 316 573.6 313.6C581 310 588 307 594 305.4C605 301 617 298 626.9 296.8C630 296.5 631 298 630 299.2C620 303 612 306 604.3 309.5C594 315 583 322 573.6 327.9C567 332 562 337 557.2 340.2C545 348 533 355 522.3 358.7C512 361 501 362 491.5 361.8C475 361 458 359 441.3 357.7C448 353 454 351 460.8 350.5C470 349.5 479 349 487.4 348.4C498 347 507 344 512 340.2C516 336 518 332 517.2 327.9C516 322 514 319 510 317.7C504 315.5 497 315 491.5 315.6C485 316.5 480 318 475.1 320.8C470 324 466 327 463.8 330C463 327 467 322 471 317.7C477 312 483 308 489.5 304.3C498 300 507 297 516.1 295.1C523 293 530 291 536.6 289C542 286 547 282 551 279.7Z" fill="#8fc0c3"/>
<g clip-path="url(#bc)"><path d="M551 279.7C560 279 566 277 573.6 275.6C585 268 596 262 604.3 259.2C606 260 606 262 604 264C596 274 587 280 573.6 285.9C566 288 560 290 557.2 293.1C553 297 551 301 552 305.4C553 311 555 315 558.2 316.7C563 318 568 316 573.6 313.6C581 310 588 307 594 305.4C605 301 617 298 626.9 296.8C630 296.5 631 298 630 299.2C620 303 612 306 604.3 309.5C594 315 583 322 573.6 327.9C567 332 562 337 557.2 340.2C545 348 533 355 522.3 358.7C512 361 501 362 491.5 361.8C475 361 458 359 441.3 357.7C448 353 454 351 460.8 350.5C470 349.5 479 349 487.4 348.4C498 347 507 344 512 340.2C516 336 518 332 517.2 327.9C516 322 514 319 510 317.7C504 315.5 497 315 491.5 315.6C485 316.5 480 318 475.1 320.8C470 324 466 327 463.8 330C463 327 467 322 471 317.7C477 312 483 308 489.5 304.3C498 300 507 297 516.1 295.1C523 293 530 291 536.6 289C542 286 547 282 551 279.7Z" fill="#fff" transform="translate(-2,-5)"/></g>
<!-- black patches -->
<path d="M571.5 276.7C582 270 594 263 604.3 259.2C606 260 606 262 604 264C596 272 588 278 577.7 282.8C575 281 573 279 571.5 276.7Z" fill="#111"/>
<path d="M482 310C492 303 508 296 524 293.5C522 299 512 304 500 307C493 309 487 310 482 310Z" fill="#111"/>
<path d="M507 317C514 320 518 326 517.5 331C517 337 513 342 507 345C500 348 492 349 484 349.5C492 345 499 341 504 336C509 331 510 324 507 317Z" fill="#111"/>
<path d="M596 310.5C586 316 577 322 569 332C568.5 327 570 322 573 319.5C580 315 588 312 596 310.5Z" fill="#111"/>
<path d="M551 279.7C560 279 566 277 573.6 275.6C585 268 596 262 604.3 259.2C606 260 606 262 604 264C596 274 587 280 573.6 285.9C566 288 560 290 557.2 293.1C553 297 551 301 552 305.4C553 311 555 315 558.2 316.7C563 318 568 316 573.6 313.6C581 310 588 307 594 305.4C605 301 617 298 626.9 296.8C630 296.5 631 298 630 299.2C620 303 612 306 604.3 309.5C594 315 583 322 573.6 327.9C567 332 562 337 557.2 340.2C545 348 533 355 522.3 358.7C512 361 501 362 491.5 361.8C475 361 458 359 441.3 357.7C448 353 454 351 460.8 350.5C470 349.5 479 349 487.4 348.4C498 347 507 344 512 340.2C516 336 518 332 517.2 327.9C516 322 514 319 510 317.7C504 315.5 497 315 491.5 315.6C485 316.5 480 318 475.1 320.8C470 324 466 327 463.8 330C463 327 467 322 471 317.7C477 312 483 308 489.5 304.3C498 300 507 297 516.1 295.1C523 293 530 291 536.6 289C542 286 547 282 551 279.7Z" fill="none" stroke="#111" stroke-width="1.2"/>
<!-- head -->
<clipPath id="hc"><path d="M418.4 200.4C430 204 443 208 453 213C458 211 464 210 469.6 209C480 204 490 199 499.8 196C510 193 520 191 531.3 190.7L548.4 157.9L561.5 194.6C568 198 573 202 576 207.8C580 216 581 225 581 234C580 245 575 258 568 265.5C555 280 540 288 526 291.8C510 298 495 301 478.8 301C460 300 445 296 434 289C426 282 423 273 423.6 265.5C423 258 423 254 425 251C423 234 420 218 418.4 200.4Z"/></clipPath>
<path d="M418.4 200.4C430 204 443 208 453 213C458 211 464 210 469.6 209C480 204 490 199 499.8 196C510 193 520 191 531.3 190.7L548.4 157.9L561.5 194.6C568 198 573 202 576 207.8C580 216 581 225 581 234C580 245 575 258 568 265.5C555 280 540 288 526 291.8C510 298 495 301 478.8 301C460 300 445 296 434 289C426 282 423 273 423.6 265.5C423 258 423 254 425 251C423 234 420 218 418.4 200.4Z" fill="#8fc0c3"/>
<g clip-path="url(#hc)"><path d="M418.4 200.4C430 204 443 208 453 213C458 211 464 210 469.6 209C480 204 490 199 499.8 196C510 193 520 191 531.3 190.7L548.4 157.9L561.5 194.6C568 198 573 202 576 207.8C580 216 581 225 581 234C580 245 575 258 568 265.5C555 280 540 288 526 291.8C510 298 495 301 478.8 301C460 300 445 296 434 289C426 282 423 273 423.6 265.5C423 258 423 254 425 251C423 234 420 218 418.4 200.4Z" fill="#fff" transform="translate(-3,-8)"/></g>
<path d="M418.4 200.4C430 204 443 208 453 213C458 211 464 210 469.6 209C480 204 490 199 499.8 196C510 193 520 191 531.3 190.7L548.4 157.9L561.5 194.6C568 198 573 202 576 207.8C580 216 581 225 581 234C580 245 575 258 568 265.5C555 280 540 288 526 291.8C510 298 495 301 478.8 301C460 300 445 296 434 289C426 282 423 273 423.6 265.5C423 258 423 254 425 251C423 234 420 218 418.4 200.4Z" fill="none" stroke="#111" stroke-width="1.2"/>
<!-- black ear patch -->
<path d="M418.4 200.4C430 204 443 208 453 213C458 211 464 210 469.6 209C469 218 463 228 453.5 235C445 241 434 246 425 251C423 234 420 218 418.4 200.4Z" fill="#111"/>
<path d="M426 218L430 234L436 226Z" fill="#f17378"/>
<path d="M551 172L549 192L557 193Z" fill="#f17378"/>
<!-- eyes -->
<path d="M522 230C528 218 548 209 570.7 214C567 226 552 235 536 235C528 235 524 233 522 230Z" fill="none" stroke="#111" stroke-width="1.2"/>
<path d="M551 213.5C550.5 219 552 225 553.6 230C554 225 553 218 551 213.5Z" fill="#111" stroke="#111" stroke-width="1.2"/>
<path d="M443.3 265.5C453 248 478 236 501 237.5C497 253 481 265 462 267.5C452 268.5 446 267.5 443.3 265.5Z" fill="none" stroke="#111" stroke-width="1.2"/>
<path d="M476.5 241C476 247 478.5 253 481.4 257.7C481.5 252 479.5 246 476.5 241Z" fill="#111" stroke="#111" stroke-width="1.2"/>
<!-- whiskers -->
<g stroke="#1a1a1a" stroke-width="1.05" fill="none">
<path d="M568 228.8C580 222 591 216 602 211.7"/><path d="M569.4 235.3C583 230 597 225 610 222.2"/><path d="M572 242C586 237 600 234 615.3 231.4"/>
<path d="M460.4 276C443 282 426 289 410.5 295.7"/><path d="M460.4 281.3C445 289 430 297 415.8 305"/><path d="M463 286.5C450 294 437 303 424 313"/>
</g>
<!-- shadow bar -->
<path d="M450.7 403.6C458 400 468 398 479 397.7C505 397.5 530 398 557.2 398.3C575 398.6 592 399 606 399.6C614 400.5 620 402 622.6 403.6C620 405 614 406 606 406.5C590 408 573 409 557.2 409.4C540 410 525 411 508.4 411.4C495 411.5 485 410.5 479 409.4C470 408 464 407 459.5 406.5C454 406 451 405 450.7 403.6Z" fill="#0d0d0d"/>
<!-- CAT -->
<g fill="#f46fe3" stroke="#2a2030" stroke-width="1.1" stroke-linejoin="round">
<path d="M412 455L467 456.5Q471.5 457 471.5 461L471 465.4L423 464.3Q416.5 465 416.5 469.8Q417 475.5 423 475.6L471.5 474.3L472.5 478Q472 483 466 483.3L413 482Q405 481 405 469.5Q405.5 456 412 455Z"/>
<path d="M496.5 485.7L516.8 456.5L540.9 456.2L561.2 484.4L551.9 485.2L546 476L531 476.5L527 476.5L507 477.3L502.2 485.7Z"/>
<path d="M576.5 456.5L643.8 457.8L643.3 465.4L615.8 465.4L615.3 485.7L604.4 486.2L605.2 464.9L577.8 464.1Z"/>
</g>
<path d="M519.4 468.4L528.2 461.1L538.3 468.4Z" fill="#fbe7d4" stroke="#2a2030" stroke-width=".9"/>
</symbol></defs></svg><svg class="a" id="paper" style="left:346px;top:85px" width="341" height="482"><use href="#art"/></svg>
<!-- right icon col -->
<div class="a" style="left:841px;top:17px;width:5px;height:592px;background:#2f2f2f"></div>
<div class="a" id="ricons" style="left:846px;top:17px;width:29px;height:592px;background:#393939"><div class="a" style="left:0;top:0;width:29px;height:195px;background:#2f2f2f"></div><div class="a" style="left:1px;top:0;width:26px;height:195px"><div class="a" style="left:0;top:0px;width:26px;height:25px;background:#474747"><svg width="26" height="25"><path d="M7.5 9.5v-2h4l1 1.5h5.5v9.5h-10.5z" fill="none" stroke="#c4c4c4" stroke-width="1.2"/><path d="M7.5 10.5h11" stroke="#c4c4c4" stroke-width="1"/><path d="M13 11.5l1.1 2.2 2.4.3-1.8 1.6.5 2.4-2.2-1.2-2.2 1.2.5-2.4-1.8-1.6 2.4-.3z" fill="#c4c4c4"/></svg></div><div class="a" style="left:0;top:28px;width:26px;height:25px;background:#474747"><svg width="26" height="25"><path d="M7.5 9.5v-2h4l1 1.5h5.5v9.5h-10.5z" fill="none" stroke="#c4c4c4" stroke-width="1.2"/><path d="M7.5 10.5h11" stroke="#c4c4c4" stroke-width="1"/><path d="M13 11.5l1.1 2.2 2.4.3-1.8 1.6.5 2.4-2.2-1.2-2.2 1.2.5-2.4-1.8-1.6 2.4-.3z" fill="#c4c4c4"/></svg></div><div class="a" style="left:0;top:56px;width:26px;height:25px;background:#474747"><svg width="26" height="25"><path d="M7.5 9.5v-2h4l1 1.5h5.5v9.5h-10.5z" fill="none" stroke="#c4c4c4" stroke-width="1.2"/><path d="M7.5 10.5h11" stroke="#c4c4c4" stroke-width="1"/><rect x="10" y="12" width="6" height="5" fill="none" stroke="#c4c4c4"/><path d="M11 16.5l2-2 2 2" stroke="#c4c4c4" fill="none"/></svg></div><div class="a" style="left:0;top:84px;width:26px;height:25px;background:#474747"><svg width="26" height="25"><path d="M7.5 9.5v-2h4l1 1.5h5.5v9.5h-10.5z" fill="none" stroke="#c4c4c4" stroke-width="1.2"/><path d="M7.5 10.5h11" stroke="#c4c4c4" stroke-width="1"/><path d="M10 12l6 5.5M16 12l-6 5.5" stroke="#c4c4c4" stroke-width="1.6"/></svg></div><div class="a" style="left:0;top:112px;width:26px;height:25px;background:#474747"><svg width="26" height="25"><path d="M7.5 9.5v-2h4l1 1.5h5.5v9.5h-10.5z" fill="none" stroke="#c4c4c4" stroke-width="1.2"/><path d="M7.5 10.5h11" stroke="#c4c4c4" stroke-width="1"/><path d="M13 11.5l1.1 2.2 2.4.3-1.8 1.6.5 2.4-2.2-1.2-2.2 1.2.5-2.4-1.8-1.6 2.4-.3z" fill="#c4c4c4"/></svg></div><div class="a" style="left:0;top:140px;width:26px;height:25px;background:#474747"><svg width="26" height="25"><path d="M7.5 9.5v-2h4l1 1.5h5.5v9.5h-10.5z" fill="none" stroke="#c4c4c4" stroke-width="1.2"/><path d="M7.5 10.5h11" stroke="#c4c4c4" stroke-width="1"/><path d="M13 11.5l1.1 2.2 2.4.3-1.8 1.6.5 2.4-2.2-1.2-2.2 1.2.5-2.4-1.8-1.6 2.4-.3z" fill="#c4c4c4"/></svg></div><div class="a" style="left:0;top:168px;width:26px;height:25px;background:#474747"><svg width="26" height="25"><path d="M7.5 9.5v-2h4l1 1.5h5.5v9.5h-10.5z" fill="none" stroke="#c4c4c4" stroke-width="1.2"/><path d="M7.5 10.5h11" stroke="#c4c4c4" stroke-width="1"/><path d="M13 11.5l1.1 2.2 2.4.3-1.8 1.6.5 2.4-2.2-1.2-2.2 1.2.5-2.4-1.8-1.6 2.4-.3z" fill="#c4c4c4"/></svg></div></div></div>
<div class="a" style="left:875px;top:17px;width:1px;height:592px;background:#2a2a2a"></div>
<!-- right panels -->
<div class="a" id="nav" style="left:876px;top:16px;width:148px;height:215px;background:#474747">
 <div class="a" style="left:0;top:0;width:148px;height:14px;background:#383838"></div>
 <div class="a" style="left:0;top:0;width:12px;height:14px;background:#313131"><svg width="12" height="14"><path d="M3 4.5h6M3 7h6M3 9.5h6" stroke="#8a8a8a"/></svg></div>
 <div class="a" style="left:13px;top:0;width:57px;height:14px;background:#474747"><svg class="a" style="left:5px;top:2px" width="13" height="12" fill="none" stroke="#bbb" stroke-width="1.1"><rect x="3.5" y="1.5" width="8" height="7"/><path d="M1.5 3.5v7h8"/></svg><span class="a t" style="left:23px;top:3px;font-size:8.5px;color:#d4d4d4;font-style:italic;--w:31px;transform:scaleX(0.574)">ナビゲーター</span></div>
 <div class="a" style="left:0;top:17px;width:144px;height:164px;background:#2b2b2b"></div>
 <svg class="a" style="left:16px;top:17px" width="116" height="164" viewBox="0 0 341 482" preserveAspectRatio="none"><use href="#art" width="341" height="482"/></svg>
 <div class="a" style="left:3px;top:185px;width:62px;height:11px;background:#4b4b4b;border:1px solid #5c5c5c;overflow:hidden"><svg class="a" style="left:0;top:0" width="62" height="11"><path d="M8 11L62 0v11z" fill="#353535"/></svg><span class="a t" style="right:1px;top:1px;font-size:9px;color:#e0e0e0;letter-spacing:.5px">8.0</span></div>
 <div class="a" style="left:19px;top:183px;width:3px;height:15px;background:#666"></div>
 <div class="a" style="left:3px;top:200px;width:62px;height:12px;background:#4b4b4b;border:1px solid #5c5c5c;overflow:hidden"><svg class="a" style="left:0;top:0" width="62" height="12"><path d="M26 12C32 2 40 1 50 2C56 3 60 8 62 12z" fill="#353535"/></svg><span class="a" style="left:0;top:0;width:14px;height:10px;background:#2b2b2b"></span><span class="a t" style="left:1px;top:1px;font-size:9px;color:#e0e0e0;letter-spacing:.5px">0.0</span></div>
 <div class="a" style="left:33px;top:198px;width:3px;height:16px;background:#666"></div>
 <svg class="a" style="left:68px;top:183px" width="80" height="32" fill="none" stroke="#b4b4b4" stroke-width="1.1">
  <circle cx="8" cy="8.5" r="5.8"/><path d="M5 8.5h6"/>
  <circle cx="23.7" cy="8.5" r="5.8"/><path d="M20.7 8.5h6M23.7 5.5v6"/>
  <circle cx="39" cy="8.5" r="5.8"/><rect x="36.5" y="6" width="5" height="5" fill="#b4b4b4"/>
  <path d="M51.5 3.5h4v4h-4zM56.5 8.5h4v4h-4zM51.5 3.5l9 9"/>
  <rect x="67.5" y="3.5" width="10" height="10"/><path d="M69.5 5.5l6 6M69.5 5.5h3M69.5 5.5v3M75.5 11.5h-3M75.5 11.5v-3"/>
  <path d="M2.5 24A5.5 5.5 0 1 1 5.25 28.76"/><path d="M0.3 23.2h4.4l-2.2 3.6z" fill="#b4b4b4" stroke="none"/>
  <path d="M29.2 24A5.5 5.5 0 1 0 26.45 28.76"/><path d="M27 23.2h4.4l-2.2 3.6z" fill="#b4b4b4" stroke="none"/>
  <circle cx="39" cy="24" r="5.8"/><circle cx="39" cy="24" r="1.5" fill="#b4b4b4"/><path d="M39 18v2"/>
  <path d="M52 20v8l4-4zM59 20v8l-4-4z" fill="#b4b4b4"/><path d="M55.5 18v13" />
  <path d="M68 19h10l-5 4zM68 30h10l-5-4z" fill="#b4b4b4"/><path d="M66 24.5h14"/>
 </svg>
</div>
<div class="a" id="lprop" style="left:876px;top:231px;width:148px;height:121px;background:#3d3d3d">
 <div class="a" style="left:0;top:0;width:148px;height:15px;background:#383838"></div>
 <div class="a" style="left:0;top:1px;width:13px;height:14px;background:#313131"><svg width="13" height="14"><path d="M3.5 4.5h6M3.5 7h6M3.5 9.5h6" stroke="#8a8a8a"/></svg></div>
 <div class="a" style="left:15px;top:1px;width:71px;height:14px;background:#474747"><svg class="a" style="left:4px;top:1px" width="13" height="13" fill="none" stroke="#c4c4c4" stroke-width="1"><path d="M1.5 4.5L6 2l4.5 2.5L6 7zM1.5 7L6 9.5 10.5 7M1.5 9.5L6 12l4.5-2.5"/><rect x="8" y="9" width="4" height="3.5" fill="#c4c4c4" stroke="none"/></svg><span class="a t" style="left:21px;top:3px;font-size:9px;color:#d8d8d8;--w:47px;transform:scaleX(0.580)">レイヤープロパティ</span></div>
 <div class="a" style="left:87px;top:1px;width:56px;height:14px;background:#3f3f3f"><svg class="a" style="left:5px;top:2px" width="12" height="10"><rect x="0.5" y="0.5" width="11" height="9" fill="#5a5a5a" stroke="#666"/></svg><span class="a t" style="left:22px;top:3px;font-size:9px;color:#5f5f5f;--w:32px;transform:scaleX(0.593)">カラーセット</span></div>
 <div class="a" style="left:0;top:15px;width:144px;height:106px;background:#3d3d3d"></div>
 <span class="a t" style="left:8px;top:20px;font-size:10px;color:#d6d6d6;--w:18px;transform:scaleX(0.900)">効果</span>
 <div class="a" style="left:26px;top:24px;width:110px;height:1px;background:#5c5c5c"></div>
 <div class="a" style="left:59px;top:30px;width:77px;height:16px;background:#545454">
  <svg width="77" height="16" fill="none" stroke="#b0b0b0" stroke-width="1.1"><circle cx="8" cy="8" r="5"/><circle cx="24.5" cy="8" r="4.8" fill="#777"/><path d="M21 5a4.8 4.8 0 017 6z" fill="#ccc" stroke="none"/><g fill="#bbb" stroke="none"><rect x="37" y="3" width="2" height="2"/><rect x="41" y="3" width="2" height="2"/><rect x="45" y="3" width="2" height="2"/><rect x="39" y="5" width="2" height="2"/><rect x="43" y="5" width="2" height="2"/><rect x="37" y="7" width="2" height="2"/><rect x="41" y="7" width="2" height="2"/><rect x="45" y="7" width="2" height="2"/><rect x="39" y="9" width="2" height="2"/><rect x="43" y="9" width="2" height="2"/><rect x="37" y="11" width="2" height="2"/><rect x="41" y="11" width="2" height="2"/><rect x="45" y="11" width="2" height="2"/></g><rect x="52.5" y="3.5" width="7" height="7" fill="#888"/><path d="M55.5 6.5v7h7v-7"/><path d="M66 6.5l3 3 3-3" stroke="#ccc"/></svg>
 </div>
 <span class="a t" style="left:8px;top:49px;font-size:10px;color:#d6d6d6;--w:27px;transform:scaleX(0.900)">表現色</span>
 <div class="a" style="left:35px;top:53px;width:101px;height:1px;background:#5c5c5c"></div>
 <div class="a" style="left:12px;top:61px;width:83px;height:16px;background:#545454">
  <svg class="a" style="left:19px;top:1px" width="14" height="14"><circle cx="7" cy="5" r="3.3" fill="#e84545"/><circle cx="4.5" cy="9" r="3.3" fill="#3ec24a"/><circle cx="9.5" cy="9" r="3.3" fill="#3d8ee0"/></svg>
  <span class="a t" style="left:34px;top:3px;font-size:10px;color:#dadada;--w:21px;transform:scaleX(0.700)">カラー</span>
  <svg class="a" style="left:73px;top:5px" width="8" height="6"><path d="M1 1.5l3 3 3-3" stroke="#c8c8c8" fill="none" stroke-width="1.1"/></svg>
 </div>
 <div class="a" style="left:144px;top:15px;width:4px;height:106px;background:#474747"></div>
</div>
<div class="a" style="left:876px;top:352px;width:148px;height:4px;background:#2c2c2c"></div>
<div class="a" id="layer" style="left:876px;top:356px;width:148px;height:253px;background:#3d3d3d">
 <div class="a" style="left:0;top:0;width:148px;height:12px;background:#383838"></div>
 <div class="a" style="left:0;top:0;width:13px;height:12px;background:#313131"><svg width="13" height="12"><path d="M3.5 3.5h6M3.5 6h6M3.5 8.5h6" stroke="#8a8a8a"/></svg></div>
 <div class="a" style="left:14px;top:0;width:45px;height:12px;background:#474747"><svg class="a" style="left:5px;top:0" width="12" height="12" fill="none" stroke="#c8c8c8" stroke-width="1"><path d="M1 3.5L6 1l5 2.5L6 6zM1 6l5 2.5L11 6M1 8.5L6 11l5-2.5"/></svg><span class="a t" style="left:22px;top:2px;font-size:9px;color:#d8d8d8;--w:21px;transform:scaleX(0.583)">レイヤー</span></div>
 <div class="a" style="left:60px;top:0;width:22px;height:12px;background:#3f3f3f"><svg width="22" height="12"><path d="M6 3h10M6 6h10M6 9h10" stroke="#666" stroke-width="1.5"/></svg></div>
 <div class="a" style="left:84px;top:0;width:22px;height:12px;background:#3f3f3f"><svg width="22" height="12"><rect x="6" y="2" width="4" height="4" fill="#666"/><rect x="12" y="2" width="4" height="4" fill="#666"/><path d="M8 6v4M14 6v4M5 9h12" stroke="#666"/></svg></div>
 <div class="a" style="left:108px;top:0;width:22px;height:12px;background:#3f3f3f"><svg width="22" height="12"><rect x="6" y="2" width="10" height="8" fill="#5a5a5a" stroke="#666"/></svg></div>
 <div class="a" style="left:0;top:12px;width:148px;height:53px;background:#474747"></div>
 <div class="a" style="left:1px;top:14px;width:29px;height:17px;background:#575757"><svg width="29" height="17" fill="none" stroke="#888" stroke-width="1.1"><rect x="3.5" y="2.5" width="11" height="11"/><path d="M19 7l3 3 3-3" stroke="#aaa"/></svg></div>
 <div class="a" style="left:32px;top:14px;width:42px;height:17px;background:#575757"><span class="a t" style="left:8px;top:3px;font-size:10px;color:#dcdcdc">通常</span><svg class="a" style="left:31px;top:6px" width="8" height="6"><path d="M1 1.5l3 3 3-3" stroke="#aaa" fill="none" stroke-width="1.1"/></svg></div>
 <div class="a" style="left:78px;top:19px;width:39px;height:7px;background-color:#fafafa;background-image:linear-gradient(45deg,#cfcfcf 25%,transparent 25%,transparent 75%,#cfcfcf 75%),linear-gradient(45deg,#cfcfcf 25%,transparent 25%,transparent 75%,#cfcfcf 75%);background-size:6px 6px;background-position:0 0,3px 3px"></div>
 <div class="a" style="left:117px;top:15px;width:3px;height:16px;background:#6a6a6a"></div>
 <span class="a t" style="left:122px;top:18px;font-size:9px;color:#dcdcdc;letter-spacing:.4px;--w:15px;transform:scaleX(0.925)">100</span>
 <svg class="a" style="left:139px;top:17px" width="7" height="12" fill="none" stroke="#ccc"><path d="M1 4l2.5-2.5L6 4M1 8l2.5 2.5L6 8"/></svg>
 <svg class="a" style="left:0;top:32px" width="148" height="33" fill="none" stroke="#c4c4c4" stroke-width="1">
  <rect x="20.5" y="3.5" width="7" height="8" fill="#c4c4c4"/><path d="M22.5 1.5h7v9" /><path d="M18.5 5.5v8h7"/>
  <path d="M39 3h10M44 3v3M40 6h8M42 6v7h4V6M38 9h12"/>
  <path d="M55 2h5l-1 6 2 4h-4z" fill="#aaa"/><path d="M58 9l4 3" stroke="#888"/>
  <path d="M71 7V5a3.5 3.5 0 017 0v2"/><rect x="69.5" y="7" width="10" height="6" fill="#c4c4c4" stroke="none"/>
  <path d="M87 8V6a2.5 2.5 0 015 0v2"/><rect x="85.5" y="8" width="8" height="5" fill="#c4c4c4" stroke="none"/><g fill="#c4c4c4" stroke="none"><rect x="92" y="2" width="3" height="3"/><rect x="96" y="5" width="3" height="3"/><rect x="92" y="8" width="3" height="3"/><rect x="96" y="1" width="3" height="1"/></g>
  <g stroke="#5e5e5e" stroke-width="1.2"><rect x="108.5" y="3.5" width="8" height="8"/><path d="M112 7l6 6M118 7l-6 6M118 8l3 3 3-3"/><path d="M130 3l8 8M130 3h6M130 3v6M133 11l5-5M136 8l3 3 3-3"/></g>
  <rect x="3.5" y="17.5" width="12" height="12" rx="1"/><path d="M3.5 23.5h12" />
  <path d="M28.5 17.5h9v9h-9z"/><circle cx="37" cy="28" r="2.5" fill="#555"/>
  <rect x="43.5" y="17.5" width="10" height="10"/><circle cx="48.5" cy="22.5" r="3"/><circle cx="52.5" cy="28" r="2.5" fill="#555"/>
  <path d="M58.5 20.5h4l1 1.5h6v6.5h-11z" fill="#c4c4c4"/><circle cx="68.5" cy="28.5" r="2.5" fill="#555"/>
  <rect x="74.5" y="23.5" width="6" height="6"/><path d="M77.5 20.5v-3h6v6h-3"/><path d="M76 28l4-4"/>
  <rect x="89.5" y="23.5" width="6" height="6"/><path d="M92.5 20.5v-3h6v6h-3"/><path d="M91 28l4-4"/>
  <rect x="105.5" y="17.5" width="12" height="12" fill="#ccc" stroke="none"/><circle cx="111.5" cy="23.5" r="3.2" fill="#333" stroke="none"/>
  <g stroke="#5e5e5e"><rect x="120.5" y="19.5" width="12" height="9"/><path d="M124 24h5"/></g>
  <path d="M137.5 19.5h8M139.5 17.5h4M138.5 19.5v10h6v-10M140.5 21v7M142.5 21v7"/>
 </svg>
 <div class="a" style="left:0;top:65px;width:148px;height:1px;background:#2c2c2c"></div><div class="a" style="left:0;top:1px;width:148px;height:252px">
 <div class="a" style="left:0;top:65px;width:138px;height:26px;background:#383838;border-bottom:1px solid #2c2c2c"></div><svg class="a" style="left:1px;top:73px" width="14" height="10"><path d="M1 5C3.5 1.5 10.5 1.5 13 5C10.5 8.5 3.5 8.5 1 5z" fill="#cfcfcf"/><circle cx="7" cy="5" r="2" fill="#6a6a6a"/><circle cx="7" cy="5" r="1" fill="#ddd"/></svg><div class="a" style="left:19px;top:74px;width:9px;height:9px;border:1px solid #444"></div><div class="a" style="left:15px;top:65px;width:1px;height:26px;background:#2c2c2c"></div><div class="a" style="left:29px;top:65px;width:1px;height:26px;background:#2c2c2c"></div><div class="a" style="left:36px;top:69px;width:14px;height:20px;background-color:#fff;background-image:linear-gradient(45deg,#d4d4d4 25%,transparent 25%,transparent 75%,#d4d4d4 75%),linear-gradient(45deg,#d4d4d4 25%,transparent 25%,transparent 75%,#d4d4d4 75%);background-size:8px 8px;background-position:0 0,4px 4px"></div><span class="a t" style="left:56px;top:71px;font-size:9px;color:#d4d4d4;--w:43px;transform:scaleX(0.988)">100 %通常</span><span class="a t" style="left:57px;top:80px;font-size:9.5px;color:#d4d4d4">線画</span><div class="a" style="left:0;top:91px;width:138px;height:26px;background:#383838;border-bottom:1px solid #2c2c2c"></div><div class="a" style="left:30px;top:92px;width:108px;height:25px;background:#66748f"></div><svg class="a" style="left:1px;top:99px" width="14" height="10"><path d="M1 5C3.5 1.5 10.5 1.5 13 5C10.5 8.5 3.5 8.5 1 5z" fill="#cfcfcf"/><circle cx="7" cy="5" r="2" fill="#6a6a6a"/><circle cx="7" cy="5" r="1" fill="#ddd"/></svg><svg class="a" style="left:16px;top:99px" width="13" height="12" fill="none" stroke="#cfcfcf" stroke-width="1.1"><path d="M1 11h11M2 10l8-8 1.5 1.5-8 8z"/></svg><div class="a" style="left:15px;top:91px;width:1px;height:26px;background:#2c2c2c"></div><div class="a" style="left:29px;top:91px;width:1px;height:26px;background:#2c2c2c"></div><div class="a" style="left:32px;top:93px;width:21px;height:23px;border:1px solid #aab4c8;background:#2a2a2a"></div><svg class="a" style="left:35px;top:96px" width="15" height="19" viewBox="0 0 341 482" preserveAspectRatio="none"><use href="#art" width="341" height="482"/></svg><span class="a t" style="left:56px;top:97px;font-size:9px;color:#dde2ee;--w:43px;transform:scaleX(0.988)">100 %通常</span><span class="a t" style="left:57px;top:106px;font-size:9.5px;color:#e6e9f0">色</span><div class="a" style="left:0;top:117px;width:138px;height:26px;background:#383838;border-bottom:1px solid #2c2c2c"></div><svg class="a" style="left:1px;top:125px" width="14" height="10"><path d="M1 5C3.5 1.5 10.5 1.5 13 5C10.5 8.5 3.5 8.5 1 5z" fill="#cfcfcf"/><circle cx="7" cy="5" r="2" fill="#6a6a6a"/><circle cx="7" cy="5" r="1" fill="#ddd"/></svg><div class="a" style="left:19px;top:126px;width:9px;height:9px;border:1px solid #444"></div><div class="a" style="left:15px;top:117px;width:1px;height:26px;background:#2c2c2c"></div><div class="a" style="left:29px;top:117px;width:1px;height:26px;background:#2c2c2c"></div><div class="a" style="left:36px;top:121px;width:14px;height:20px;background-color:#fff;background-image:linear-gradient(45deg,#d4d4d4 25%,transparent 25%,transparent 75%,#d4d4d4 75%),linear-gradient(45deg,#d4d4d4 25%,transparent 25%,transparent 75%,#d4d4d4 75%);background-size:8px 8px;background-position:0 0,4px 4px"></div><span class="a t" style="left:56px;top:123px;font-size:9px;color:#d4d4d4;--w:43px;transform:scaleX(0.988)">100 %通常</span><span class="a t" style="left:57px;top:132px;font-size:9.5px;color:#d4d4d4">影</span><div class="a" style="left:0;top:143px;width:138px;height:26px;background:#383838;border-bottom:1px solid #2c2c2c"></div><div class="a" style="left:3px;top:152px;width:9px;height:9px;border:1px solid #444"></div><div class="a" style="left:19px;top:152px;width:9px;height:9px;border:1px solid #444"></div><div class="a" style="left:15px;top:143px;width:1px;height:26px;background:#2c2c2c"></div><div class="a" style="left:29px;top:143px;width:1px;height:26px;background:#2c2c2c"></div><div class="a" style="left:36px;top:147px;width:14px;height:20px;background-color:#fff;background-image:linear-gradient(45deg,#d4d4d4 25%,transparent 25%,transparent 75%,#d4d4d4 75%),linear-gradient(45deg,#d4d4d4 25%,transparent 25%,transparent 75%,#d4d4d4 75%);background-size:8px 8px;background-position:0 0,4px 4px"></div><span class="a t" style="left:56px;top:149px;font-size:9px;color:#d4d4d4;--w:37px;transform:scaleX(0.961)">20 %通常</span><span class="a t" style="left:57px;top:158px;font-size:9.5px;color:#d4d4d4">下描き</span><div class="a" style="left:0;top:169px;width:138px;height:26px;background:#383838;border-bottom:1px solid #2c2c2c"></div><svg class="a" style="left:1px;top:177px" width="14" height="10"><path d="M1 5C3.5 1.5 10.5 1.5 13 5C10.5 8.5 3.5 8.5 1 5z" fill="#cfcfcf"/><circle cx="7" cy="5" r="2" fill="#6a6a6a"/><circle cx="7" cy="5" r="1" fill="#ddd"/></svg><div class="a" style="left:19px;top:178px;width:9px;height:9px;border:1px solid #444"></div><div class="a" style="left:15px;top:169px;width:1px;height:26px;background:#2c2c2c"></div><div class="a" style="left:29px;top:169px;width:1px;height:26px;background:#2c2c2c"></div><div class="a" style="left:36px;top:173px;width:15px;height:21px;background:#fff"></div><div class="a" style="left:61px;top:173px;width:13px;height:13px;background:#fff;border:1px solid #888"><svg width="11" height="11"><path d="M2 2h5l2 2v5H2z" fill="none" stroke="#333"/><path d="M2 9l3-3" stroke="#333"/></svg></div><span class="a t" style="left:76px;top:185px;font-size:10px;color:#d4d4d4">用紙</span>
 </div><div class="a" style="left:138px;top:66px;width:6px;height:187px;background:#414141"></div>
 <div class="a" style="left:144px;top:0;width:4px;height:253px;background:#474747"></div>
</div>
</body></html>
